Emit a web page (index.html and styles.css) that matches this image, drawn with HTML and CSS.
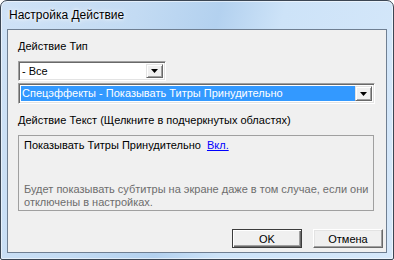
FILE: index.html
```html
<!DOCTYPE html>
<html lang="ru">
<head>
    <meta charset="UTF-8">
    <title>Настройка Действие</title>
    <link rel="stylesheet" href="styles.css">
</head>
<body>
    <div class="window">
        <div class="titlebar">Настройка Действие</div>

        <div class="client">
            <div class="label label-type">Действие Тип</div>

            <!-- action type combo -->
            <div class="combo combo-short">
                <span class="combo-value">- Все</span>
                <span class="combo-btn">
                    <svg width="7" height="4" viewBox="0 0 7 4"><path d="M0 0h7L3.5 4z" fill="#000"/></svg>
                </span>
            </div>

            <!-- action combo, focused -->
            <div class="combo combo-wide">
                <span class="combo-value selected">Спецэффекты - Показывать Титры Принудительно</span>
                <span class="combo-btn">
                    <svg width="7" height="4" viewBox="0 0 7 4"><path d="M0 0h7L3.5 4z" fill="#000"/></svg>
                </span>
            </div>

            <div class="label label-text">Действие Текст (Щелкните в подчеркнутых областях)</div>

            <div class="textbox">
                <div class="action-line">Показывать Титры Принудительно <a class="link" href="#">Вкл.</a></div>
                <div class="hint">Будет показывать субтитры на экране даже в том случае, если они<br>отключены в настройках.</div>
            </div>

            <div class="buttons">
                <button type="button" class="btn btn-default">OK</button>
                <button type="button" class="btn">Отмена</button>
            </div>
        </div>
    </div>
</body>
</html>
```

FILE: styles.css
```css
body {
    margin: 0;
    padding: 0;
    background: #fff;
    font-family: "Liberation Sans", Arial, sans-serif;
    font-size: 11px;
    line-height: 13px;
    color: #000;
}
.window {
    width: 394px;
    height: 260px;
    box-sizing: border-box;
    display: flex;
    flex-direction: column;
    padding: 0 6px 6px 6px;
    border: 1px solid #3b4654;
    border-radius: 7px 7px 2px 2px;
    background: linear-gradient(105deg, #cfe2f6 0%, #c3dbf3 30%, #b3d1ef 48%, #cde3f8 62%, #d6e8fa 100%);
    box-shadow: inset 0 0 0 1px rgba(255, 255, 255, 0.55);
}
.titlebar {
    height: 28px;
    flex: none;
    display: flex;
    align-items: center;
    padding-left: 2px;
    font-family: "Liberation Sans", Arial, sans-serif;
    font-size: 12px;
    color: #000;
    text-shadow: 0 0 6px #fff, 0 0 3px #fff;
}
.client {
    flex: 1;
    display: flex;
    flex-direction: column;
    background: #f0f0f0;
    border: 1px solid #6f7f92;
    padding: 0 2px 0 10px;
}
.label-type {
    margin-top: 10px;
}
.label-text {
    margin-top: 10px;
}
.combo {
    display: flex;
    box-sizing: border-box;
    background: #fff;
    border: 1px solid;
    border-color: #a0a0a0 #fff #fff #a0a0a0;
    box-shadow: inset 1px 1px 0 #696969, inset -1px -1px 0 #e3e3e3;
    padding: 2px;
}
.combo-short {
    width: 148px;
    height: 20px;
    margin-top: 8px;
}
.combo-wide {
    width: 357px;
    height: 21px;
    margin-top: 2px;
}
.combo-value {
    flex: 1;
    padding-left: 1px;
    display: flex;
    align-items: center;
    white-space: nowrap;
    overflow: hidden;
}
.combo-value.selected {
    background: #3399ff;
    color: #fff;
}
.combo-btn {
    width: 17px;
    flex: none;
    box-sizing: border-box;
    display: flex;
    align-items: center;
    justify-content: center;
    background: #f0f0f0;
    border: 1px solid;
    border-color: #e3e3e3 #696969 #696969 #e3e3e3;
    box-shadow: inset 1px 1px 0 #fff, inset -1px -1px 0 #a0a0a0;
}
.textbox {
    width: 356px;
    height: 76px;
    box-sizing: border-box;
    margin-top: 8px;
    border: 1px solid #a0a0a0;
    padding: 3px 0 0 5px;
}
.link {
    color: #0000ff;
    text-decoration: underline;
    margin-left: 3px;
}
.hint {
    margin-top: 31px;
    color: #6d6d6d;
    white-space: nowrap;
}
.buttons {
    display: flex;
    justify-content: flex-end;
    gap: 11px;
    margin-top: 18px;
    padding-right: 1px;
}
.btn {
    width: 70px;
    height: 19px;
    padding: 0;
    font-family: "Liberation Sans", Arial, sans-serif;
    font-size: 11px;
    color: #000;
    background: #f0f0f0;
    border: 1px solid;
    border-color: #fff #696969 #696969 #fff;
    box-shadow: inset -1px -1px 0 #a0a0a0, inset 1px 1px 0 #e3e3e3;
}
.btn-default {
    border: 1px solid #3c3c3c;
    box-shadow: inset 1px 1px 0 #fff, inset -1px -1px 0 #696969, inset -2px -2px 0 #a0a0a0;
}
```
